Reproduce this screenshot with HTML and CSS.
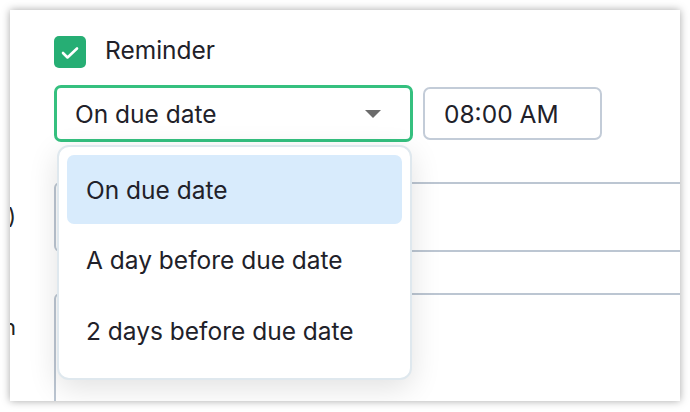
FILE: index.html
```html
<!DOCTYPE html>
<html>
<head>
<meta charset="utf-8">
<link rel="stylesheet" href="styles.css">
</head>
<body>
<div class="card">
  <div class="reminder-row">
    <span class="checkbox">
      <svg width="32" height="32" viewBox="0 0 32 32"><path d="M9 17 L13.5 21.5 L23 12.5" fill="none" stroke="#fff" stroke-width="2.6" stroke-linecap="round" stroke-linejoin="round"/></svg>
    </span>
    <span class="reminder-label">Reminder</span>
  </div>
  <div class="controls">
    <div class="select">
      <span>On due date</span>
      <span class="caret"></span>
    </div>
    <div class="time">08:00 AM</div>
  </div>
  <div class="field field-first">
    <span class="field-label">Tags (Optional)</span>
    <div class="field-box"></div>
  </div>
  <div class="field field-second">
    <span class="field-label">Description</span>
    <div class="field-box tall"></div>
  </div>
  <ul class="menu">
    <li class="menu-item active">On due date</li>
    <li class="menu-item">A day before due date</li>
    <li class="menu-item">2 days before due date</li>
  </ul>
</div>
</body>
</html>
```
FILE: styles.css
```css
* { box-sizing: border-box; }
html, body { margin: 0; padding: 0; }
body {
  background: #ffffff;
  width: 690px;
  height: 412px;
  overflow: hidden;
  font-family: Inter, "Noto Sans", sans-serif;
  color: #212129;
}
.card {
  position: relative;
  margin: 10px;
  width: 670px;
  height: 391px;
  background: #fff;
  box-shadow: 0 0 8px rgba(0,0,0,0.35);
  overflow: hidden;
  padding: 26px 0 0 44px;
}
.reminder-row {
  display: flex;
  align-items: center;
  gap: 19px;
  height: 32px;
}
.checkbox {
  flex: none;
  width: 32px;
  height: 32px;
  border-radius: 5px;
  background: #26ae74;
  display: flex;
}
.reminder-label {
  font-size: 24.5px;
  padding-bottom: 5px;
}
.controls {
  display: flex;
  align-items: center;
  gap: 10px;
  margin-top: 17px;
}
.select {
  flex: none;
  width: 359px;
  height: 57px;
  border: 3px solid #35c07f;
  border-radius: 7px;
  display: flex;
  align-items: center;
  justify-content: space-between;
  padding: 0 29px 0 18px;
  font-size: 24.5px;
}
.caret {
  width: 0;
  height: 0;
  border-left: 8px solid transparent;
  border-right: 8px solid transparent;
  border-top: 8px solid #6b6b6b;
}
.time {
  flex: none;
  width: 179px;
  height: 53px;
  border: 2px solid #c3ccd8;
  border-radius: 7px;
  display: flex;
  align-items: center;
  padding-left: 19px;
  font-size: 24.5px;
}
.field {
  display: flex;
  align-items: flex-start;
  gap: 38px;
  margin-left: -238px;
}
.field-first { margin-top: 40px; }
.field-second { margin-top: 41px; }
.field-label {
  flex: none;
  width: 200px;
  padding-top: 21px;
  text-align: right;
  font-size: 22px;
  white-space: nowrap;
  color: #222;
}
.field-box {
  width: 640px;
  height: 70px;
  border: 2px solid #bcc6d2;
  border-radius: 6px;
  flex: none;
}
.field-box.tall { height: 150px; }
.menu {
  position: absolute;
  left: 47px;
  top: 135px;
  width: 355px;
  height: 235px;
  margin: 0;
  padding: 8px 8px 0 8px;
  list-style: none;
  background: #fff;
  border: 2px solid #dfe8ee;
  border-radius: 12px;
  box-shadow: 0 8px 30px rgba(0,0,0,0.12);
}
.menu-item {
  height: 71px;
  display: flex;
  align-items: center;
  padding-left: 19px;
  font-size: 24.5px;
  border-radius: 7px;
  color: #212129;
}
.menu-item.active {
  height: 69px;
  background: #d8ebfc;
}
```
